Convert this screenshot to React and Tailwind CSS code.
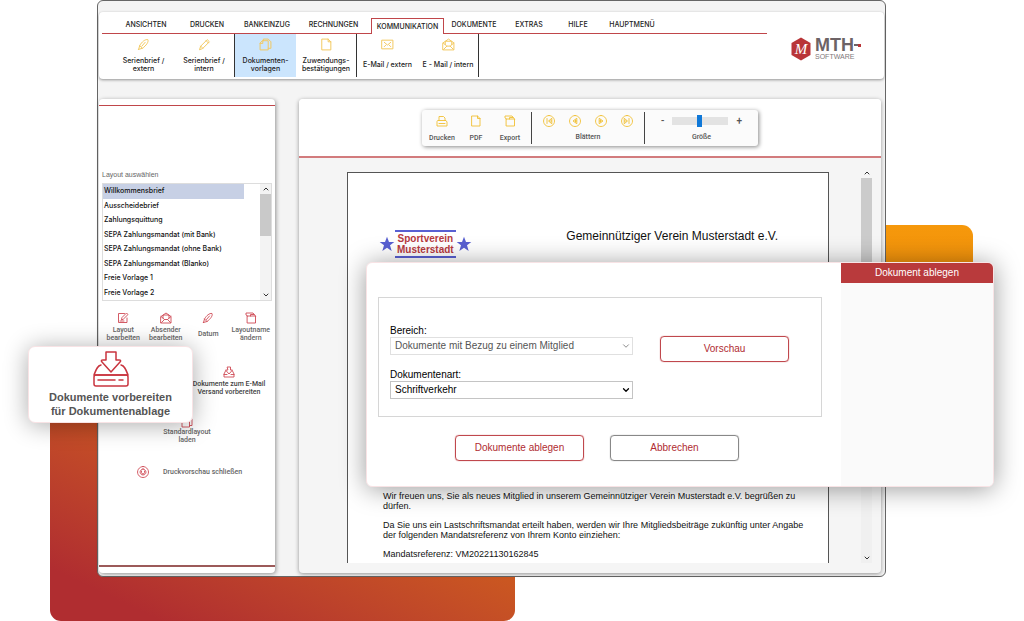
// App.jsx
import React, { useState } from 'react';
import { ChevronDown, ChevronUp } from 'lucide-react';

const iconPaths = {
    pen: 'M3 21l2-7C9 7 15 2 20 3c2 4-3 11-10 16l-7 2z M5 14l5 5 M9 15l6-7',
    pencil: 'M3 21l2-6L17 3l4 4L9 19z M15 5l4 4 M5 15l4 4',
    docs: 'M8 5V2h9l5 5v12h-5 M7 5h10v17H2V10z M7 5v5H2',
    file: 'M4 2h11l5 5v15H4z M15 2v5h5',
    mail: 'M2 4h20v16H2z M6 8l6 5 6-5 M6 16l3-3 M18 16l-3-3',
    mailOpen: 'M2 9l10-7 10 7v13H2z M6 12V6h12v6 M2 9l7 6h6l7-6 M3 21l6-6 M21 21l-6-6',
    printer: 'M6 11V3h9l3 3v5 M4 11h16l2 3v8H2v-8z M6 17h12',
    folder: 'M5 8h16v14H5z M5 8L2 6V2h14l5 6 M11 8V5h7',
    edit: 'M20 12v9H3V3h12 M9 15l1-4 9-9 3 3-9 9z M6 18h8',
    tray: 'M9 2h6v6h4l-7 8-7-8h4z M5 10l-3 6v6h20v-6l-3-6 M2 17h6 M16 17h6',
    close: 'M12 1a11 11 0 1 0 .1 0z M12 6a6 6 0 1 0 .1 0z M9 10v3a3 3 0 0 0 6 0v-3',
    first: 'M12 1a11 11 0 1 0 .1 0z M8 7v10 M17 7l-6 5 6 5z M13 12h4',
    prev: 'M12 1a11 11 0 1 0 .1 0z M15 7l-7 5 7 5z M12 12h3 M13 10v4',
    next: 'M12 1a11 11 0 1 0 .1 0z M9 7l7 5-7 5z M9 12h4 M11 10v4',
    last: 'M12 1a11 11 0 1 0 .1 0z M16 7v10 M7 7l6 5-6 5z M7 12h4',
};

const Icon = ({ name, className = 'size-3' }) => (
    <svg
        viewBox="0 0 24 24"
        className={`${className} shrink-0`}
        fill="none"
        stroke="currentColor"
        strokeWidth="1.8"
        strokeLinejoin="round"
        strokeLinecap="round"
        aria-hidden="true"
    >
        <path d={iconPaths[name]} />
    </svg>
);

const tabs = [
    { label: 'ANSICHTEN', width: 'w-[60px]' },
    { label: 'DRUCKEN', width: 'w-[62px]' },
    { label: 'BANKEINZUG', width: 'w-[58px]' },
    { label: 'RECHNUNGEN', width: 'w-[75px]' },
    { label: 'KOMMUNIKATION', width: 'w-[73px]' },
    { label: 'DOKUMENTE', width: 'w-[60px]' },
    { label: 'EXTRAS', width: 'w-[50px]' },
    { label: 'HILFE', width: 'w-[48px]' },
    { label: 'HAUPTMENÜ', width: 'w-[60px]' },
];

const ribbon = [
    { icon: 'pen', lines: ['Serienbrief /', 'extern'] },
    { icon: 'pencil', lines: ['Serienbrief /', 'intern'], divider: true },
    { icon: 'docs', lines: ['Dokumenten-', 'vorlagen'], active: true },
    { icon: 'file', lines: ['Zuwendungs-', 'bestätigungen'], divider: true },
    { icon: 'mail', lines: ['E-Mail / extern'] },
    { icon: 'mailOpen', lines: ['E - Mail / intern'], divider: true },
];

const layouts = [
    'Willkommensbrief',
    'Ausscheidebrief',
    'Zahlungsquittung',
    'SEPA Zahlungsmandat (mit Bank)',
    'SEPA Zahlungsmandat (ohne Bank)',
    'SEPA Zahlungsmandat (Blanko)',
    'Freie Vorlage 1',
    'Freie Vorlage 2',
];

const layoutActions = [
    { icon: 'edit', lines: ['Layout', 'bearbeiten'] },
    { icon: 'mailOpen', lines: ['Absender', 'bearbeiten'] },
    { icon: 'pen', lines: ['Datum'] },
    { icon: 'folder', lines: ['Layoutname', 'ändern'] },
];

const Lines = ({ lines }) => lines.map((line) => <span key={line} className="block whitespace-nowrap">{line}</span>);

const Logo = () => (
    <div className="flex w-[117px] shrink-0 items-start pl-[23px] pt-[25px]">
        <svg viewBox="0 0 22 24" className="h-6 w-[22px]" aria-hidden="true">
            <path d="M11 0.5l9.500 5.500v12L11 23.500 1.500 18V6z" fill="#b93538" />
            <text x="11" y="17" textAnchor="middle" fontSize="15" fontStyle="italic" fontFamily="Liberation Serif, serif" fill="#fff">M</text>
        </svg>
        <div className="pl-[3px]">
            <div className="flex items-center">
                <span className="text-[18px] font-bold leading-[16px] text-[#6d6366]">MTH</span>
                <span className="h-[2px] w-1 bg-[#6d6366]" />
                <span className="size-[3px] bg-[#b93538]" />
            </div>
            <div className="text-[7px] leading-[8px] text-[#80787a]">SOFTWARE</div>
        </div>
    </div>
);

const Header = () => (
    <header className="mx-px flex h-[67px] rounded-[4px] bg-white shadow-[0_1px_3px_#00000066]">
        <div className="min-w-0 flex-1">
            <nav className="ml-[3px] flex h-[22px] items-end font-['Inter',sans-serif] text-[7px] font-medium text-[#222]">
                <span className="h-px w-[14px] bg-[#c0464a]" />
                {tabs.map((tab) =>
                    tab.label === 'KOMMUNIKATION' ? (
                        <a key={tab.label} href="#" className={`${tab.width} h-4 border-x border-t border-[#c0464a] text-center leading-[15px]`}>
                            {tab.label}
                        </a>
                    ) : (
                        <a key={tab.label} href="#" className={`${tab.width} h-4 border-b border-[#c0464a] text-center leading-[13px]`}>
                            {tab.label}
                        </a>
                    )
                )}
                <span className="h-px flex-1 bg-[#c0464a]" />
            </nav>
            <div className="flex h-[43px] pl-[14px] font-['Inter',sans-serif] text-[7px] font-medium leading-[8px] text-[#222]">
                {ribbon.map((item) => (
                    <button
                        key={item.icon}
                        className={`flex w-[61px] flex-col items-center gap-[6px] pt-1 ${item.active ? 'bg-[#cbe5fd]' : ''} ${item.divider ? 'border-r border-[#333]' : ''}`}
                    >
                        <Icon name={item.icon} className="size-[13px] text-[#f3c95f]" />
                        <span className="flex h-4 flex-col justify-center">
                            <Lines lines={item.lines} />
                        </span>
                    </button>
                ))}
            </div>
        </div>
        <Logo />
    </header>
);

const Sidebar = () => {
    const [selected, setSelected] = useState('Willkommensbrief');

    return (
        <aside className="flex w-44 shrink-0 flex-col rounded-[4px] bg-white pb-[6px] pt-[6px] font-['Roboto',sans-serif] text-[7px] font-medium leading-[8px] text-[#666] shadow-[1px_1px_4px_#00000066]">
            <div className="h-px bg-[#c0464a]" />
            <div className="flex-1 px-[3px] pt-[65px]">
                <div id="layout-label" className="font-['Liberation_Sans',Arial,sans-serif] font-normal">Layout auswählen</div>
                <div className="mt-1 flex h-[118px] border border-[#ddd]">
                    <ul role="listbox" aria-labelledby="layout-label" className="flex flex-1 flex-col font-['Inter',sans-serif] text-[#111]">
                        {layouts.map((layout) => (
                            <li
                                key={layout}
                                role="option"
                                aria-selected={layout === selected}
                                onClick={() => setSelected(layout)}
                                className={`mr-4 flex flex-1 items-center whitespace-nowrap pl-px ${layout === selected ? 'bg-[#c7d0e5]' : ''}`}
                            >
                                {layout}
                            </li>
                        ))}
                    </ul>
                    <div className="flex w-[11px] flex-col items-center bg-[#f3f3f3] text-[#333]">
                        <ChevronUp className="h-[10px] w-2" strokeWidth={3} />
                        <div className="h-[42px] w-full bg-[#c9c9c9]" />
                        <ChevronDown className="mt-auto h-[10px] w-2" strokeWidth={3} />
                    </div>
                </div>
                <div className="mt-[11px] grid grid-cols-4">
                    {layoutActions.map((action) => (
                        <button key={action.lines[0]} className="flex flex-col items-center gap-[2px]">
                            <Icon name={action.icon} className="size-3 text-[#cf4a55]" />
                            <span className="flex h-4 flex-col justify-center">
                                <Lines lines={action.lines} />
                            </span>
                        </button>
                    ))}
                </div>
                <button className="ml-[91px] mt-[24px] flex w-[72px] flex-col items-center gap-[2px] text-[#444]">
                    <Icon name="tray" className="size-3 text-[#cf4a55]" />
                    <span><Lines lines={['Dokumente zum E-Mail', 'Versand vorbereiten']} /></span>
                </button>
                <button className="mx-auto mt-5 flex flex-col items-center">
                    <Icon name="docs" className="size-3 text-[#cf4a55]" />
                    <span><Lines lines={['Standardlayout', 'laden']} /></span>
                </button>
                <button className="ml-[35px] mt-[22px] flex items-center gap-[14px]">
                    <Icon name="close" className="size-3 text-[#cf4a55]" />
                    Druckvorschau schließen
                </button>
            </div>
            <div className="h-[2px] bg-[#9c5a59]" />
        </aside>
    );
};

const Toolbar = () => {
    const [zoom, setZoom] = useState(48);

    return (
        <div className="mx-auto flex h-9 w-[336px] rounded-[3px] bg-[#fbfbfb] py-[2px] font-['Roboto',sans-serif] text-[7px] font-medium leading-[8px] text-[#555] shadow-[1px_1px_4px_#00000077]">
            <div className="flex w-[110px] border-r border-[#444] pl-[3px]">
                {[['printer', 'Drucken'], ['file', 'PDF'], ['folder', 'Export']].map(([icon, label]) => (
                    <button key={label} className="flex w-[34px] flex-col items-center gap-[7px] pt-[3px]">
                        <Icon name={icon} className="size-3 text-[#f0c033]" />
                        {label}
                    </button>
                ))}
            </div>
            <div className="flex w-[113px] flex-col items-center gap-[6px] border-r border-[#444] pt-[3px]">
                <div className="flex gap-[14px]">
                    {['first', 'prev', 'next', 'last'].map((name) => (
                        <button key={name} aria-label={name}>
                            <Icon name={name} className="size-3 text-[#f0c033]" />
                        </button>
                    ))}
                </div>
                Blättern
            </div>
            <div className="flex flex-1 flex-col items-center gap-[6px] pt-[3px]">
                <div className="flex h-3 items-center gap-2 text-[10px]">
                    <button aria-label="Verkleinern">-</button>
                    <input
                        id="zoom"
                        type="range"
                        value={zoom}
                        onChange={(e) => setZoom(e.target.value)}
                        className="h-2 w-14 appearance-none bg-[#e3e3e3] [&::-webkit-slider-thumb]:h-3 [&::-webkit-slider-thumb]:w-[5px] [&::-webkit-slider-thumb]:appearance-none [&::-webkit-slider-thumb]:bg-[#0f78d8]"
                    />
                    <button aria-label="Vergrößern">+</button>
                </div>
                <label htmlFor="zoom">Größe</label>
            </div>
        </div>
    );
};

const Star = () => (
    <svg viewBox="0 0 24 24" className="size-4" fill="#5960d2" aria-hidden="true">
        <path d="M12 1l3 8h8l-6.500 5 2.500 8.500-7-5-7 5L7.500 14 1 9h8z" />
    </svg>
);

const Preview = () => (
    <main className="flex min-w-0 flex-1 flex-col rounded-[4px] bg-[#f5f5f5] shadow-[0_1px_4px_#00000066]">
        <div className="rounded-t-[4px] border-b-2 border-[#d27b7d] bg-white pb-[10px] pt-[11px]">
            <Toolbar />
        </div>
        <div className="flex flex-1 gap-8 pb-[10px] pl-12 pr-[9px] pt-[14px]">
            <article className="h-[391px] min-w-0 flex-1 border-x border-t border-[#555] bg-white pl-[31px] pr-4 text-[#111]">
                <div className="flex justify-between pr-[34px] pt-[57px]">
                    <div className="flex items-center">
                        <Star />
                        <div className="border-y-2 border-[#5960d2] px-[2px] py-px text-center text-[10px] font-bold leading-[11px] text-[#b73a41]">
                            Sportverein
                            <br />
                            Musterstadt
                        </div>
                        <Star />
                    </div>
                    <h1 className="text-[12px] leading-[12px]">Gemeinnütziger Verein Musterstadt e.V.</h1>
                </div>
                <div className="space-y-[9px] whitespace-nowrap pl-1 pt-[233px] text-[9px] leading-[10px]">
                    <p>
                        Wir freuen uns, Sie als neues Mitglied in unserem Gemeinnütziger Verein Musterstadt e.V. begrüßen zu
                        <br />
                        dürfen.
                    </p>
                    <p>
                        Da Sie uns ein Lastschriftsmandat erteilt haben, werden wir Ihre Mitgliedsbeiträge zukünftig unter Angabe
                        <br />
                        der folgenden Mandatsreferenz von Ihrem Konto einziehen:
                    </p>
                    <p>Mandatsreferenz: VM20221130162845</p>
                </div>
            </article>
            <div className="flex w-[11px] flex-col items-center bg-[#f0f0f0] text-[#333]">
                <div className="w-full bg-[#f5f5f5]">
                    <ChevronUp className="mx-auto -mt-1 h-[10px] w-2" strokeWidth={3} />
                </div>
                <div className="h-[200px] w-full bg-[#cbcbcb]" />
                <ChevronDown className="mt-auto h-[10px] w-2" strokeWidth={3} />
            </div>
        </div>
    </main>
);

const selectClass = 'block h-[18px] w-full appearance-none border bg-white pl-1 pr-4 leading-[14px]';

const Dialog = () => (
    <section
        role="dialog"
        aria-labelledby="dialog-title"
        className="absolute left-[366px] right-[30px] top-[262px] flex h-[225px] rounded-[6px] border border-[#f8e3e5] bg-white text-[10px] leading-[12px] text-black shadow-[0_2px_26px_#00000066]"
    >
        <div className="flex-1 pl-[11px] pr-[19px] pt-[34px]">
            <div className="flex h-[120px] items-start justify-between border border-[#d6d6d6] pl-[11px] pr-8 pt-[27px]">
                <div className="w-[243px]">
                    <label htmlFor="bereich" className="block">Bereich:</label>
                    <div className="grid items-center">
                        <select id="bereich" disabled className={`${selectClass} col-start-1 row-start-1 border-[#e0e0e0] text-[#555] opacity-100`}>
                            <option>Dokumente mit Bezug zu einem Mitglied</option>
                        </select>
                        <ChevronDown className="pointer-events-none col-start-1 row-start-1 mr-[2px] size-[10px] justify-self-end text-[#777]" />
                    </div>
                    <label htmlFor="dokumentenart" className="mt-[14px] block">Dokumentenart:</label>
                    <div className="grid items-center">
                        <select id="dokumentenart" className={`${selectClass} col-start-1 row-start-1 border-[#c4c4c4]`}>
                            <option>Schriftverkehr</option>
                        </select>
                        <ChevronDown className="pointer-events-none col-start-1 row-start-1 mr-[2px] size-[10px] justify-self-end" strokeWidth={3} />
                    </div>
                </div>
                <button className="mt-[11px] h-[26px] w-[129px] rounded-[4px] border border-[#c0484d] text-[#b02c32] shadow-[0_0_1px_#c0484d]">Vorschau</button>
            </div>
            <div className="mt-[18px] flex justify-center gap-[26px] pr-[6px]">
                <button className="h-[26px] w-[129px] rounded-[4px] border border-[#c0484d] text-[#b02c32] shadow-[0_0_1px_#c0484d]">Dokumente ablegen</button>
                <button className="h-[26px] w-[129px] rounded-[4px] border border-[#888] text-[#b02c32] shadow-[0_0_1px_#888]">Abbrechen</button>
            </div>
        </div>
        <div className="w-[152px] rounded-r-[5px] bg-[#fafafa]">
            <h2 id="dialog-title" className="h-5 rounded-tr-[5px] bg-[#b93a3c] text-center leading-[19px] text-white">Dokument ablegen</h2>
        </div>
    </section>
);

const ArchiveCard = () => (
    <button className="absolute left-[28px] top-[346px] flex h-[77px] w-[165px] flex-col items-center rounded-[7px] border border-[#f8e3e5] bg-white pt-1 text-[11px] font-bold leading-[14px] text-[#555] shadow-[0_2px_24px_#00000055]">
        <svg viewBox="0 0 36 36" className="size-9" fill="none" stroke="#c9353f" strokeWidth="1.500" strokeLinejoin="round" strokeLinecap="round" aria-hidden="true">
            <path d="M13 1h10v8h3c2 0 2 1 1 2l-9 10-9-10c-1-1-1-2 1-2h3z" />
            <path d="M8 14c-4 1-5 5-7 10h34c-2-5-3-9-7-10" />
            <path d="M3 24h30a2 2 0 0 1 2 2v7a2 2 0 0 1-2 2H3a2 2 0 0 1-2-2v-7a2 2 0 0 1 2-2z" />
            <path d="M5 29h17M26 29h4" />
        </svg>
        <span className="mt-[3px]">
            <Lines lines={['Dokumente vorbereiten', 'für Dokumentenablage']} />
        </span>
    </button>
);

const App = () => {
    return (
        <div className="relative min-h-screen overflow-hidden bg-white font-['Liberation_Sans',Arial,sans-serif]">
            {/* coloured shapes behind the window */}
            <div className="absolute left-[50px] right-[509px] top-[400px] h-[221px] rounded-[11px] bg-linear-to-tr from-[#b02d30] from-12% via-[#cb5820] via-60% to-[#d4681c]" />
            <div className="absolute right-[51px] top-[225px] h-[200px] w-[300px] rounded-[11px] bg-linear-to-b from-[#f6980b] to-[#e07d10]" />

            <div className="relative ml-[97px] mr-[138px] rounded-[6px] border border-[#666] bg-[#f4f4f4] pb-[3px] pt-[11px]">
                <Header />
                <div className="mt-[20px] flex gap-6 pl-px pr-1">
                    <Sidebar />
                    <Preview />
                </div>
            </div>

            <Dialog />
            <ArchiveCard />
        </div>
    );
};

export default App;
